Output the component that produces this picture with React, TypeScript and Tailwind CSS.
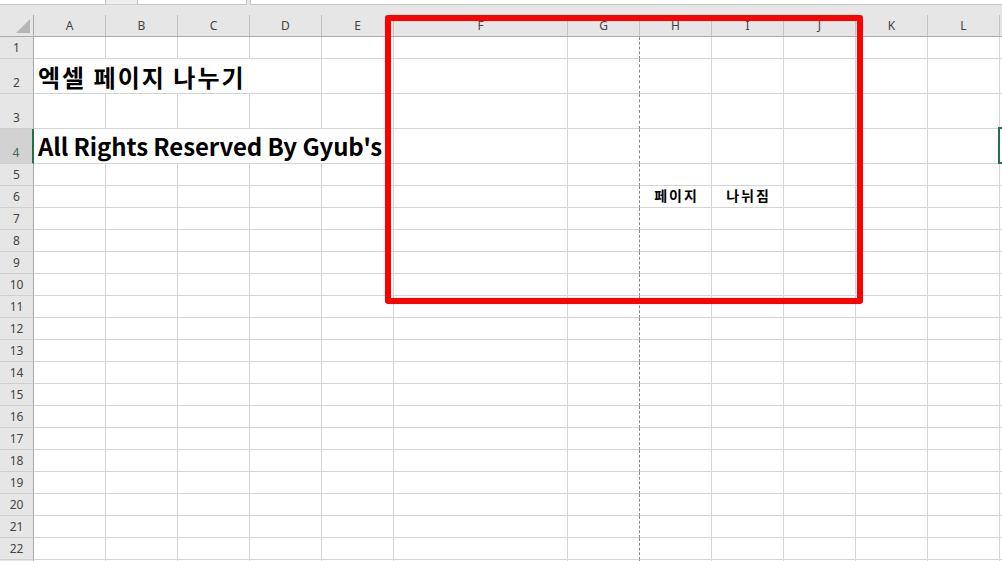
import React from "react";

type Col = { l: string; w: number };
const COLS: Col[] = [
  { l: "A", w: 72 },
  { l: "B", w: 72 },
  { l: "C", w: 72 },
  { l: "D", w: 72 },
  { l: "E", w: 72 },
  { l: "F", w: 174 },
  { l: "G", w: 72 },
  { l: "H", w: 72 },
  { l: "I", w: 72 },
  { l: "J", w: 72 },
  { l: "K", w: 72 },
  { l: "L", w: 72 },
  { l: "M", w: 72 },
];

const ROW_H: number[] = [22, 35, 35, 35, ...Array(18).fill(22), 22];

const uiFont = { fontFamily: '"Noto Sans", "Liberation Sans", sans-serif' };
const cellFont = { fontFamily: '"Noto Sans CJK KR", "Noto Sans", sans-serif' };

function Cell({
  w,
  dashed,
  children,
  center,
}: {
  w: number;
  dashed?: boolean;
  children?: React.ReactNode;
  center?: boolean;
}) {
  return (
    <div
      className={
        "shrink-0 h-full border-b border-r border-b-[#d4d4d4] flex items-end overflow-visible whitespace-nowrap " +
        (dashed ? "border-r-[#8a8a8a] border-dashed " : "border-r-[#d4d4d4] ") +
        (center ? "justify-center" : "")
      }
      style={{ width: w, borderBottomStyle: "solid" }}
    >
      {children}
    </div>
  );
}

function Row({ idx, h }: { idx: number; h: number }) {
  const n = idx + 1;
  const selected = n === 4;
  const cells: React.ReactNode[] = [];
  if (n === 2 || n === 4) {
    const span = n === 2 ? 4 : 5;
    cells.push(
      <div
        key="merged"
        className={
          "shrink-0 h-full border-b border-r border-[#d4d4d4] flex items-end pl-[4px] whitespace-nowrap overflow-visible text-black font-bold text-[24px] leading-none " +
          (n === 2 ? "pb-[4px] tracking-[2px]" : "pb-[5px] tracking-[-0.1px]")
        }
        style={{ width: 72 * span, ...cellFont }}
      >
        <span className="relative z-10">
          {n === 2 ? "엑셀 페이지 나누기" : "All Rights Reserved By Gyub's"}
        </span>
      </div>
    );
    COLS.slice(span).forEach((c) =>
      cells.push(<Cell key={c.l} w={c.w} dashed={c.l === "G"} />)
    );
  } else {
    COLS.forEach((c) => {
      let content: React.ReactNode = null;
      if (n === 6 && c.l === "H") content = "페이지";
      if (n === 6 && c.l === "I") content = "나뉘짐";
      cells.push(
        <Cell key={c.l} w={c.w} dashed={c.l === "G"} center={!!content}>
          {content && (
            <span
              className="text-[14px] font-bold text-black leading-none pb-[5px] tracking-[2px] pl-[2px]"
              style={cellFont}
            >
              {content}
            </span>
          )}
        </Cell>
      );
    });
  }
  return (
    <div className="flex shrink-0" style={{ height: h }}>
      <div
        className={
          "shrink-0 w-[34px] h-full border-b border-b-[#cfcfcf] flex items-end justify-center pb-[2px] text-[12px] leading-none " +
          (selected
            ? "bg-[#d2d2d2] border-r-2 border-r-[#217346] text-[#3d6b50]"
            : "bg-[#e6e6e6] border-r border-r-[#a8a8a8] text-[#444]")
        }
        style={uiFont}
      >
        {n <= 22 && <span className="pb-[2px]">{n}</span>}
      </div>
      {cells}
    </div>
  );
}

export default function App() {
  return (
    <div className="relative w-[1002px] h-[561px] overflow-hidden bg-white">
      {/* top toolbar strip */}
      <div className="flex h-[5px] bg-[#e6e6e6]">
        <div className="w-[106px] h-full bg-white border-b border-r border-[#c6c6c6]" />
        <div className="w-[31px] h-full bg-[#eeeeee] border-b border-[#d0d0d0]" />
        <div className="w-[110px] h-full bg-white border-b border-x border-[#c6c6c6]" />
        <div className="w-[3px]" />
        <div className="flex-1 h-full bg-white border-b border-l border-[#c6c6c6]" />
      </div>
      <div className="h-[10px] bg-[#e6e6e6]" />
      {/* column header */}
      <div className="flex h-[22px] bg-[#e6e6e6] border-b border-[#ababab]" style={uiFont}>
        <div className="shrink-0 w-[34px] h-full border-r border-[#ababab] flex items-end justify-end pr-[3px] pb-[3px]">
          <svg width="14" height="14" viewBox="0 0 14 14">
            <polygon points="14,0 14,14 0,14" fill="#b5b5b5" />
          </svg>
        </div>
        {COLS.map((c) => (
          <div
            key={c.l}
            className="shrink-0 h-full border-r border-[#c2c2c2] flex items-center justify-center text-[12px] text-[#444] leading-none"
            style={{ width: c.w }}
          >
            {c.l !== "M" ? c.l : ""}
          </div>
        ))}
      </div>
      {/* grid rows */}
      <div className="flex flex-col">
        {ROW_H.map((h, i) => (
          <Row key={i} idx={i} h={h} />
        ))}
      </div>
      {/* selected cell M4 */}
      <div className="absolute left-[998px] top-[127px] w-[76px] h-[37px] border-2 border-[#217346]" />
      {/* red annotation box */}
      <div className="absolute left-[385px] top-[15px] w-[478px] h-[289px] border-[6px] border-[#ff0000] rounded-[3px] pointer-events-none" />
    </div>
  );
}
